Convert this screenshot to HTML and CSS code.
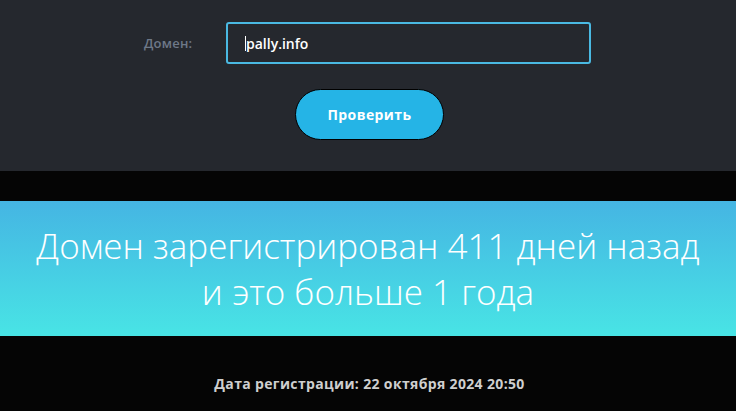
FILE: index.html
```html
<!DOCTYPE html>
<html lang="ru">
<head>
<meta charset="utf-8">
<link rel="stylesheet" href="styles.css">
</head>
<body>
<section class="check">
  <form class="row">
    <label class="label" for="d">Домен:</label>
    <div class="input"><span class="caret"></span>pally.info</div>
  </form>
  <button class="btn" type="button">Проверить</button>
</section>
<section class="result">
  <h1 class="headline">Домен зарегистрирован 411 дней назад<br>и это больше 1 года</h1>
</section>
<p class="date">Дата регистрации: 22 октября 2024 20:50</p>
</body>
</html>
```
FILE: styles.css
```css
html, body { margin: 0; padding: 0; }
body {
  background: #050505;
  font-family: "Open Sans", "Noto Sans", sans-serif;
  width: 736px;
  height: 411px;
  overflow: hidden;
}
.check {
  background: #25282e;
  height: 171px;
  box-sizing: border-box;
  padding-top: 22px;
  display: flex;
  flex-direction: column;
  align-items: center;
}
.row {
  display: flex;
  align-items: center;
  gap: 31px;
  margin: 0 0 0 -1px;
}
.label {
  color: #6e7888;
  font-size: 13px;
  font-weight: 600;
  width: 51px;
  white-space: nowrap;
  letter-spacing: 0.2px;
}
.input {
  width: 365px;
  height: 42px;
  box-sizing: border-box;
  border: 2px solid #4ab9e2;
  border-radius: 3px;
  background: #25282e;
  color: #ffffff;
  font-size: 14px;
  font-weight: 600;
  display: flex;
  align-items: center;
  padding-left: 17px;
}
.caret {
  width: 1px;
  height: 15px;
  background: #ffffff;
}
.btn {
  margin: 25px 0 0 3px;
  width: 149px;
  height: 51px;
  border: 1px solid #000;
  border-radius: 26px;
  background: #25b4e6;
  color: #fff;
  font-family: inherit;
  font-size: 14px;
  font-weight: 700;
  letter-spacing: 0.4px;
  padding: 0;
}
.result {
  margin-top: 30px;
  height: 135px;
  background: linear-gradient(180deg, #45b5e3 0%, #48e4e5 100%);
  display: flex;
  align-items: center;
  justify-content: center;
}
.headline {
  margin: 0;
  color: #fff;
  font-weight: 300;
  font-size: 35px;
  line-height: 46px;
  text-align: center;
}
.date {
  margin: 38px 0 0 3px;
  text-align: center;
  color: #cfcfcf;
  font-size: 14px;
  font-weight: 700;
  letter-spacing: 0.35px;
}
```
